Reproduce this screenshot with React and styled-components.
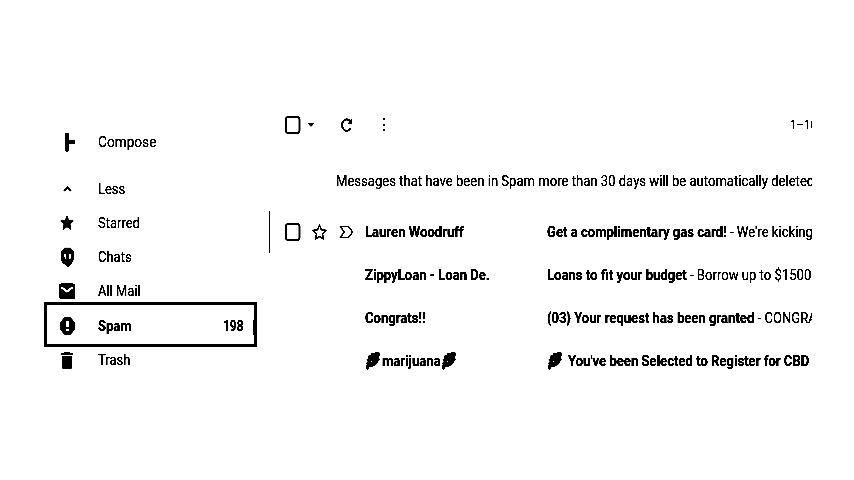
import React from 'react';
import styled, { createGlobalStyle } from 'styled-components';

const GlobalStyle = createGlobalStyle`
  * { box-sizing: border-box; }
  body { margin: 0; background: #fff; }
`;

const Page = styled.div`
  display: flex;
  width: 854px;
  height: 480px;
  padding: 103px 42px 0 44px;
  overflow: hidden;
  background: #fff;
  color: #000;
  font-family: Roboto, sans-serif;
  filter: brightness(0.72) contrast(9);
`;

const Sidebar = styled.nav`
  display: flex;
  flex-direction: column;
  width: 225px;
  flex: none;
`;

const NavItem = styled.div`
  display: flex;
  align-items: center;
  flex: none;
  width: 213px;
  height: ${(p) => p.$h || 34.1}px;
  margin-bottom: ${(p) => p.$gap || 0}px;
  padding: 0 13px 0 15px;
`;

const SelectedNavItem = styled(NavItem)`
  height: 45px;
  margin: -6px 0 -4px;
  padding: 3px 9px 0 12px;
  border: 3px solid #000;
  background: linear-gradient(#000, #000) right 15px / 1px 15px no-repeat;
`;

const IconCell = styled.span`
  display: flex;
  justify-content: center;
  width: 16px;
  margin-right: 23px;
  svg { display: block; }
`;

const Text = styled.span`
  display: block;
  flex: none;
  width: ${(p) => (p.$w ? `${p.$w}px` : 'auto')};
  font-size: ${(p) => p.$size || 15}px;
  line-height: 20px;
  font-weight: ${(p) => (p.$bold ? 700 : 400)};
  white-space: pre;
  transform: scaleX(${(p) => p.$x || 0.873});
  transform-origin: left center;
`;

const Count = styled.span`
  margin-left: auto;
  width: 22px;
  font-size: 14px;
  font-weight: 700;
  transform: scaleX(0.85);
  transform-origin: left center;
`;

const Main = styled.main`
  flex: 1;
  min-width: 0;
  overflow: hidden;
`;

const Toolbar = styled.div`
  display: flex;
  align-items: center;
  height: 44px;
  padding-left: 16px;
`;

const ToolIcon = styled.span`
  display: flex;
  flex: none;
  margin-right: ${(p) => p.$gap}px;
`;

const PageRange = styled.div`
  flex: none;
  margin-left: auto;
  width: 22px;
  overflow: hidden;
`;

const Notice = styled.div`
  display: flex;
  align-items: center;
  height: 61px;
  padding: 7px 0 0 67px;
  margin-bottom: 2px;
`;

const Mail = styled.div`
  display: flex;
  align-items: center;
  height: 43px;
  padding-left: 1px;
`;

const ActiveMail = styled(Mail)`
  background: linear-gradient(#000, #000) 0 1px / 1px 42px no-repeat;
`;

const Controls = styled.div`
  display: flex;
  align-items: center;
  flex: none;
  width: 95px;
  padding-left: 15px;
`;

const Sender = styled.div`
  display: flex;
  align-items: center;
  flex: none;
  width: 182px;
`;

const Subject = styled.div`
  display: flex;
  align-items: center;
  flex: 1;
  min-width: 0;
  overflow: hidden;
`;

const Snippet = styled.span`
  font-weight: 400;
`;

const LeafCell = styled.span`
  flex: none;
  margin-right: ${(p) => p.$gap || 0}px;
  svg { display: block; }
`;

const Box = () => (
  <svg width="16" height="18" viewBox="0 0 16 18">
    <rect x="1" y="1" width="13.5" height="16" rx="2.2" fill="none" stroke="#000" strokeWidth="1.6" />
  </svg>
);

const Leaf = () => (
  <svg width="16" height="20" viewBox="0 0 16 20">
    <path d="M0.500 16 2 14 1 12 3 11 1.500 8.500 3 7.500 3.500 4.500 6 4.500 6 2.500 9 2.500 10 1.500 14.500 1.500 14.500 4 14 6 14.500 9 13 10.500 12 13 10 14 8 15.500 5.500 15.500 3.500 17 3 19 1.500 17.500Z" />
    <path d="M6 10h1.500v1.500H6z" fill="#fff" />
  </svg>
);

const icons = {
  compose: (
    <svg width="16" height="20" viewBox="0 0 16 20">
      <path d="M6 1h4v7h6v4h-6v6L8 20 6 18Z" />
    </svg>
  ),
  less: (
    <svg width="9" height="8" viewBox="0 0 9 8">
      <path d="M1 6 4.500 2.300 8 6" fill="none" stroke="#000" strokeWidth="1.5" />
    </svg>
  ),
  star: (
    <svg width="14" height="15" viewBox="2 2 20 19" preserveAspectRatio="none">
      <path d="M12 17.27 18.18 21l-1.64-7.03L22 9.24l-7.19-.61L12 2 9.19 8.63 2 9.24l5.46 4.73L5.82 21z" />
    </svg>
  ),
  chats: (
    <svg width="15" height="20" viewBox="0 0 15 20">
      <path d="M5 0.800H10L14 5V12L12 16 9.500 18.500 9 20H7.500L6 18 3 16.500 1 13V5Z" />
      <path d="M3.700 7H6.500V12H5V10H3.700ZM8.500 7H11.300V10L10.500 12H8.800V10H8.500Z" fill="#fff" />
    </svg>
  ),
  mail: (
    <svg width="16" height="16" viewBox="0 0 16 16">
      <path d="M2 0.500H14L16 2V15.500H1L0 14.500V2Z" />
      <path d="M2 4 8 8.500 14 4" fill="none" stroke="#fff" strokeWidth="2.300" />
    </svg>
  ),
  spam: (
    <svg width="15" height="18" viewBox="0 0 15 18">
      <path d="M4.500 0.500H10.500L14.500 5V13L10.500 17.500H4.500L0.500 13V5Z" />
      <path d="M6 4H9V10H6ZM6 12H9V14H6Z" fill="#fff" />
    </svg>
  ),
  trash: (
    <svg width="12" height="17" viewBox="0 0 12 17">
      <path d="M0 1H3L4 0H8L9 1H12V3H0ZM1 4.500H11V15.500L10 17H2L1 15.500Z" />
    </svg>
  ),
};

const navItems = [
  { icon: 'compose', label: 'Compose', height: 78, gap: -9.4, scale: 0.91 },
  { icon: 'less', label: 'Less' },
  { icon: 'star', label: 'Starred' },
  { icon: 'chats', label: 'Chats' },
  { icon: 'mail', label: 'All Mail' },
  { icon: 'spam', label: 'Spam', count: '198', selected: true },
  { icon: 'trash', label: 'Trash' },
];

const App = () => (
  <>
    <GlobalStyle />
    <Page>
      <Sidebar>
        {navItems.map((item) => {
          const Item = item.selected ? SelectedNavItem : NavItem;
          return (
            <Item key={item.label} $h={item.height} $gap={item.gap}>
              <IconCell>{icons[item.icon]}</IconCell>
              <Text $bold={item.selected} $x={item.scale || 0.865}>{item.label}</Text>
              {item.count && <Count>{item.count}</Count>}
            </Item>
          );
        })}
      </Sidebar>
      <Main>
        <Toolbar>
          <ToolIcon $gap={6}><Box /></ToolIcon>
          <ToolIcon $gap={25}>
            <svg width="8" height="4" viewBox="0 0 8 4"><path d="M0.800 0.500H7.200L4 3.700Z" /></svg>
          </ToolIcon>
          <ToolIcon $gap={29}>
            <svg width="13" height="16" viewBox="0 0 13 16">
              <path d="M10 4A4.700 5.700 0 1 0 10.500 11.500" fill="none" stroke="#000" strokeWidth="1.700" />
              <path d="M12 1.500V7H7.500Z" />
            </svg>
          </ToolIcon>
          <ToolIcon $gap={0}>
            <svg width="4" height="16" viewBox="0 0 4 16"><path d="M1 1H3V3H1ZM1 7H3V9H1ZM1 12H3V14H1Z" /></svg>
          </ToolIcon>
          <PageRange><Text $size={13} $x={0.88}>1–100</Text></PageRange>
        </Toolbar>
        <Notice>
          <Text $x={0.872}>Messages that have been in Spam more than 30 days will be automatically deleted</Text>
        </Notice>
        <ActiveMail>
          <Controls>
            <ToolIcon $gap={11}><Box /></ToolIcon>
            <ToolIcon $gap={11}>
              <svg width="16" height="18" viewBox="1.700 1 22 22" preserveAspectRatio="none">
                <path d="M12 17.500 17.500 20.700 16.200 14.500 21 10 14.500 9.200 12 3.500 9.500 9.200 3 10 7.800 14.500 6.500 20.700Z" fill="none" stroke="#000" strokeWidth="1.500" />
              </svg>
            </ToolIcon>
            <ToolIcon $gap={0}>
              <svg width="15" height="14" viewBox="0 0 15 14">
                <path d="M1.500 1.500H9Q11.500 3 13.500 7 11.500 11 9 12.500H1.500L5 7Z" fill="none" stroke="#000" strokeWidth="1.200" />
              </svg>
            </ToolIcon>
          </Controls>
          <Sender><Text $bold>Lauren Woodruff</Text></Sender>
          <Subject><Text $bold>Get a complimentary gas card!<Snippet> - We're kicking</Snippet></Text></Subject>
        </ActiveMail>
        <Mail>
          <Controls />
          <Sender><Text $bold>ZippyLoan - Loan De.</Text></Sender>
          <Subject><Text $bold>Loans to fit your budget<Snippet> - Borrow up to $1500</Snippet></Text></Subject>
        </Mail>
        <Mail>
          <Controls />
          <Sender><Text $bold>Congrats!!</Text></Sender>
          <Subject><Text $bold>{'(03} Your request has been granted'}<Snippet> - CONGRATS</Snippet></Text></Subject>
        </Mail>
        <Mail>
          <Controls />
          <Sender>
            <LeafCell $gap={1}><Leaf /></LeafCell>
            <Text $bold $w={59}>marijuana</Text>
            <LeafCell><Leaf /></LeafCell>
          </Sender>
          <Subject>
            <LeafCell $gap={5}><Leaf /></LeafCell>
            <Text $bold>You've been Selected to Register for CBD</Text>
          </Subject>
        </Mail>
      </Main>
    </Page>
  </>
);

export default App;
